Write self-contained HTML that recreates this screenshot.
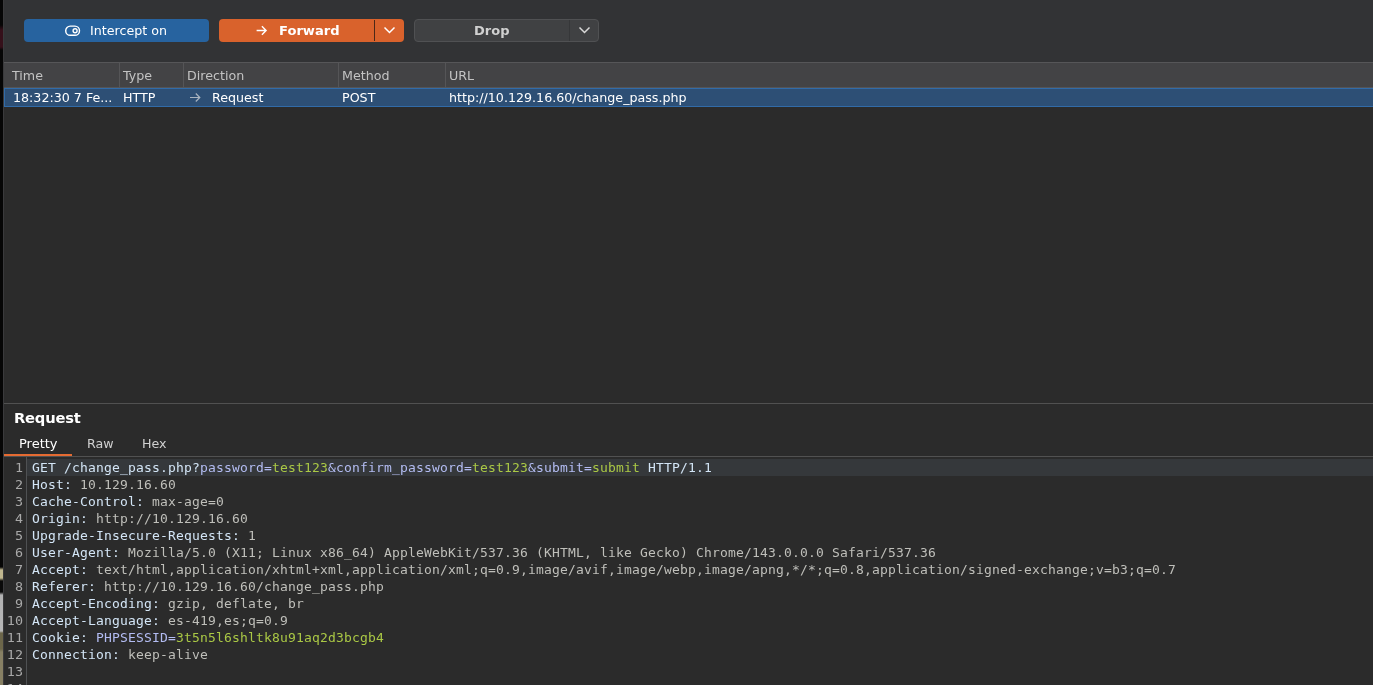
<!DOCTYPE html>
<html lang="en">
<head>
<meta charset="utf-8">
<title>Burp Suite - Proxy Intercept</title>
<style>
html,body{margin:0;padding:0;}
body{width:1373px;height:685px;overflow:hidden;background:#2b2b2b;position:relative;
  font-family:"DejaVu Sans","Liberation Sans",sans-serif;font-size:12.67px;color:#dfdfdf;}
#wrap{position:absolute;left:0;top:0;width:1373px;height:685px;will-change:transform;}
.abs{position:absolute;}
#strip{left:0;top:0;width:3px;height:685px;
  background:linear-gradient(to bottom,#060606 0px,#060606 25px,#35101a 30px,#35101a 47px,#060606 50px,#060606 567px,#bfb68e 570px,#bfb68e 578px,#0a0a0a 581px,#0a0a0a 592px,#b2b2b2 595px,#b6b6b6 631px,#6c664a 633px,#6c664a 649px,#878064 652px,#878064 685px);}
#edge{left:3px;top:0;width:1px;height:685px;background:#3a3a3c;}
#toolbar{left:4px;top:0;width:1369px;height:62px;background:#323335;}
.btn{position:absolute;top:19px;height:23px;border-radius:4px;box-sizing:border-box;}
#b1{left:24px;width:185px;background:#27639f;}
#b2{left:219px;width:185px;background:#d9622c;}
#b3{left:414px;width:185px;background:#404143;border:1px solid #505153;}
.btn span{position:absolute;white-space:nowrap;line-height:23px;top:0;}
#thead{left:4px;top:62px;width:1369px;height:26px;background:#434345;border-top:1px solid #565658;border-bottom:1px solid #545456;box-sizing:border-box;}
.th{position:absolute;top:63px;height:25px;line-height:26px;color:#c3c3c3;white-space:nowrap;}
.vsep{position:absolute;top:63px;width:1px;height:25px;background:#555557;}
#row{left:4px;top:88px;width:1369px;height:19px;background:#2d4f75;border:1px solid #316ba8;border-right:none;box-sizing:border-box;}
.td{position:absolute;top:88px;height:18px;line-height:19px;color:#ffffff;white-space:nowrap;}
#tbody{left:4px;top:107px;width:1369px;height:296px;background:#2b2b2b;}
#split{left:4px;top:403px;width:1369px;height:1px;background:#515151;}
#reqtitle{left:14px;top:407px;font-size:14.7px;letter-spacing:-0.2px;font-weight:bold;color:#ffffff;line-height:22px;white-space:nowrap;}
.tab{position:absolute;top:435px;line-height:18px;color:#d0d0d0;white-space:nowrap;}
#tabline{left:4px;top:456px;width:1369px;height:1px;background:#515151;}
#tabsel{left:4px;top:454px;width:68px;height:2px;background:#e56b32;}
#code{left:4px;top:458px;width:1369px;height:227px;background:#2b2b2b;}
#hl{left:27px;top:459px;width:1346px;height:17px;background:#35383b;}
#gutline{left:26px;top:457px;width:1px;height:228px;background:#4f5153;}
.ln{position:absolute;left:4px;width:19px;text-align:right;color:#a9a9a9;font-family:"DejaVu Sans Mono","Liberation Mono",monospace;font-size:12.3px;line-height:17px;height:17px;white-space:pre;transform:scaleX(1.09);transform-origin:100% 50%;margin-top:0.6px;}
.cl{position:absolute;left:32px;color:#bfbfba;font-family:"DejaVu Sans Mono","Liberation Mono",monospace;font-size:13px;letter-spacing:0.1734px;line-height:17px;height:17px;white-space:pre;}
.h{color:#d3e5f6;}
.p{color:#b3bcf2;}
.v{color:#aac845;}
</style>
</head>
<body>
<div id="wrap">
<div class="abs" id="toolbar"></div>
<div class="abs" id="tbody"></div>
<div class="abs" id="strip"></div>
<div class="abs" id="edge"></div>

<div class="btn" id="b1">
  <svg class="abs" style="left:40px;top:6px" width="17" height="12" viewBox="0 0 17 12"><rect x="1.7" y="1.1" width="13.8" height="9.2" rx="4.6" fill="none" stroke="#fff" stroke-width="1.45"/><circle cx="11.1" cy="5.7" r="2" fill="none" stroke="#fff" stroke-width="1.4"/></svg>
  <span style="left:66px;color:#fff;">Intercept on</span>
</div>
<div class="btn" id="b2">
  <svg class="abs" style="left:36px;top:6px" width="13" height="11" viewBox="0 0 13 11"><path d="M1.6 5.5H10.8M6.9 1.3L11.1 5.5L6.9 9.7" fill="none" stroke="#fff" stroke-width="1.4"/></svg>
  <span style="left:60px;color:#fff;font-weight:bold;font-size:13.1px;">Forward</span>
  <div class="abs" style="left:155px;top:1px;width:1px;height:21px;background:#4c2818;"></div>
  <svg class="abs" style="left:164px;top:7px" width="13" height="9" viewBox="0 0 13 9"><path d="M1.5 1.5L6.5 6.5L11.5 1.5" fill="none" stroke="#fff" stroke-width="1.5"/></svg>
</div>
<div class="btn" id="b3">
  <span style="left:59px;top:-1px;color:#d0d0d0;font-weight:bold;font-size:13px;">Drop</span>
  <div class="abs" style="left:154px;top:0px;width:1px;height:21px;background:#363739;"></div>
  <svg class="abs" style="left:163px;top:6px" width="13" height="9" viewBox="0 0 13 9"><path d="M1.5 1.5L6.5 6.5L11.5 1.5" fill="none" stroke="#d8d8d8" stroke-width="1.5"/></svg>
</div>

<div class="abs" id="thead"></div>
<div class="th" style="left:12px">Time</div>
<div class="th" style="left:123px">Type</div>
<div class="th" style="left:187px">Direction</div>
<div class="th" style="left:342px">Method</div>
<div class="th" style="left:449px">URL</div>
<div class="vsep" style="left:119px"></div>
<div class="vsep" style="left:183px"></div>
<div class="vsep" style="left:338px"></div>
<div class="vsep" style="left:445px"></div>

<div class="abs" id="row"></div>
<div class="td" style="left:13px">18:32:30 7 Fe...</div>
<div class="td" style="left:123px">HTTP</div>
<svg class="abs" style="left:189px;top:92px" width="12" height="11" viewBox="0 0 12 11"><path d="M1 5.5H10.5M6.8 1.5L10.8 5.5L6.8 9.5" fill="none" stroke="#a9b4c0" stroke-width="1.2"/></svg>
<div class="td" style="left:212px">Request</div>
<div class="td" style="left:342px">POST</div>
<div class="td" style="left:449px">http://10.129.16.60/change_pass.php</div>

<div class="abs" id="split"></div>
<div class="abs" id="reqtitle">Request</div>
<div class="tab" style="left:19px;color:#fff;font-size:13px">Pretty</div>
<div class="tab" style="left:87px">Raw</div>
<div class="tab" style="left:142px">Hex</div>
<div class="abs" id="tabline"></div>
<div class="abs" id="tabsel"></div>

<div class="abs" id="code"></div>
<div class="abs" id="hl"></div>
<div class="abs" id="gutline"></div>

<div class="ln" style="top:459px">1</div><div class="cl" style="top:459px"><span class="h">GET /change_pass.php?</span><span class="p">password=</span><span class="v">test123</span><span class="p">&amp;confirm_password=</span><span class="v">test123</span><span class="p">&amp;submit=</span><span class="v">submit</span><span class="h"> HTTP/1.1</span></div>
<div class="ln" style="top:476px">2</div><div class="cl" style="top:476px"><span class="h">Host:</span> 10.129.16.60</div>
<div class="ln" style="top:493px">3</div><div class="cl" style="top:493px"><span class="h">Cache-Control:</span> max-age=0</div>
<div class="ln" style="top:510px">4</div><div class="cl" style="top:510px"><span class="h">Origin:</span> http://10.129.16.60</div>
<div class="ln" style="top:527px">5</div><div class="cl" style="top:527px"><span class="h">Upgrade-Insecure-Requests:</span> 1</div>
<div class="ln" style="top:544px">6</div><div class="cl" style="top:544px"><span class="h">User-Agent:</span> Mozilla/5.0 (X11; Linux x86_64) AppleWebKit/537.36 (KHTML, like Gecko) Chrome/143.0.0.0 Safari/537.36</div>
<div class="ln" style="top:561px">7</div><div class="cl" style="top:561px"><span class="h">Accept:</span> text/html,application/xhtml+xml,application/xml;q=0.9,image/avif,image/webp,image/apng,*/*;q=0.8,application/signed-exchange;v=b3;q=0.7</div>
<div class="ln" style="top:578px">8</div><div class="cl" style="top:578px"><span class="h">Referer:</span> http://10.129.16.60/change_pass.php</div>
<div class="ln" style="top:595px">9</div><div class="cl" style="top:595px"><span class="h">Accept-Encoding:</span> gzip, deflate, br</div>
<div class="ln" style="top:612px">10</div><div class="cl" style="top:612px"><span class="h">Accept-Language:</span> es-419,es;q=0.9</div>
<div class="ln" style="top:629px">11</div><div class="cl" style="top:629px"><span class="h">Cookie:</span> <span class="p">PHPSESSID=</span><span class="v">3t5n5l6shltk8u91aq2d3bcgb4</span></div>
<div class="ln" style="top:646px">12</div><div class="cl" style="top:646px"><span class="h">Connection:</span> keep-alive</div>
<div class="ln" style="top:663px">13</div>
<div class="ln" style="top:680px">14</div>
</div>
</body>
</html>
